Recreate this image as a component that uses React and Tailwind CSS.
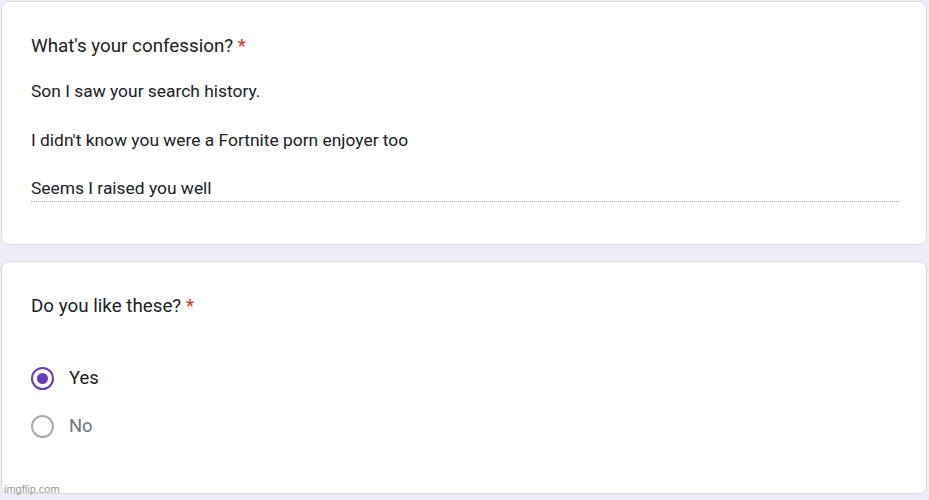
export default function App() {
  return (
    <div className="w-[929px] h-[500px] bg-[#f0ebf8] relative overflow-hidden" style={{ fontFamily: "Roboto, 'Liberation Sans', sans-serif" }}>
      <div className="pt-[1px] pl-[1px] pr-[2px] flex flex-col gap-[16px]">
        <div className="h-[244px] bg-white rounded-[8px] border border-[#dadce0] pl-[29px] pr-[27px] pt-[32px]">
          <div className="text-[18.8px] text-[#202124] leading-[24px]">
            What's your confession? <span className="text-[#d93025]">*</span>
          </div>
          <div className="mt-[22px] text-[17.4px] text-[#202124] leading-[22px]">
            <div>Son I saw your search history.</div>
            <div className="mt-[27px]">I didn't know you were a Fortnite porn enjoyer too</div>
            <div className="mt-[26px] pb-[2px] border-b border-dotted border-[#9aa0a6]">Seems I raised you well</div>
          </div>
        </div>
        <div className="h-[233px] bg-white rounded-[8px] border border-[#dadce0] pl-[29px] pr-[27px] pt-[32px]">
          <div className="text-[18.8px] text-[#202124] leading-[24px]">
            Do you like these? <span className="text-[#d93025]">*</span>
          </div>
          <div className="mt-[50px] flex flex-col gap-[28px]">
            <div className="flex items-center gap-[15px] h-[20px]">
              <div className="w-[23px] h-[23px] rounded-full border-[2px] border-[#673ab7] flex items-center justify-center">
                <div className="w-[11px] h-[11px] rounded-full bg-[#673ab7]" />
              </div>
              <span className="text-[18.4px] text-[#202124]">Yes</span>
            </div>
            <div className="flex items-center gap-[15px] h-[20px]">
              <div className="w-[23px] h-[23px] rounded-full border-[2px] border-[#a7acb1]" />
              <span className="text-[18.4px] text-[#70757a]">No</span>
            </div>
          </div>
        </div>
      </div>
      <div className="absolute left-[4px] bottom-[3px] text-[11px] text-[#9a9a9a]" style={{ fontFamily: "'Liberation Sans', sans-serif" }}>imgflip.com</div>
    </div>
  );
}
